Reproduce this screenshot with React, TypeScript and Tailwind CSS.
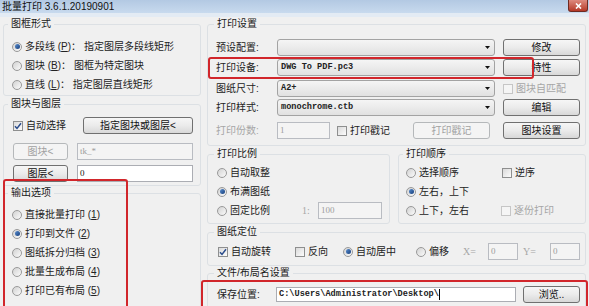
import React from 'react'

type Kids = { children?: React.ReactNode }

function Radio({ checked = false, children }: Kids & { checked?: boolean }) {
  return (
    <span className="flex items-center gap-[3px]">
      <span className="w-[10px] h-[10px] rounded-full border border-[#999] bg-linear-to-br from-[#d2d2d2] to-[#fbfbfb] flex items-center justify-center">
        {checked && <span className="w-[5px] h-[5px] rounded-full bg-linear-to-br from-[#5b8fd0] to-[#173f7c]" />}
      </span>
      <span>{children}</span>
    </span>
  )
}

function Check({ checked = false, disabled = false, children }: Kids & { checked?: boolean; disabled?: boolean }) {
  return (
    <span className={`flex items-center gap-[3px] ${disabled ? 'text-[#a6a6a6]' : ''}`}>
      <span
        className={`w-[10px] h-[10px] border flex items-center justify-center ${
          disabled ? 'border-[#c6c6c6] bg-[#f5f5f5]' : 'border-[#8e8f8f] bg-linear-to-br from-[#dadada] to-[#fcfcfc]'
        }`}
      >
        {checked && (
          <svg width="8" height="8" viewBox="0 0 8 8">
            <path d="M1 4.2 L3 6.4 L7 1.2" stroke="#2a4c8c" strokeWidth="1.5" fill="none" />
          </svg>
        )}
      </span>
      <span>{children}</span>
    </span>
  )
}

function Btn({ className = '', disabled = false, children }: Kids & { className?: string; disabled?: boolean }) {
  return (
    <button
      type="button"
      className={`h-[17px] flex items-center justify-center rounded-[3px] border ${
        disabled
          ? 'border-[#b5b8ba] bg-[#f4f4f4] text-[#a2a2a2]'
          : 'border-[#707070] bg-linear-to-b from-[#f6f6f6] via-[#ebebeb] to-[#d8d8d8] text-[#111]'
      } ${className}`}
    >
      {children}
    </button>
  )
}

function Combo({ value = '' }: { value?: string }) {
  return (
    <div className="w-[218px] h-[17px] flex items-center rounded-[3px] border border-[#a3a3a3] bg-linear-to-b from-[#f5f5f5] to-[#e1e1e1] pl-[3px] pr-[4px]">
      <span className="flex-1 font-['Liberation_Mono',monospace] text-[8.6px] font-bold text-[#222]">{value}</span>
      <svg width="5" height="3" viewBox="0 0 5 3">
        <path d="M0 0h5L2.5 3z" fill="#111" />
      </svg>
    </div>
  )
}

function Field({ value = '', className = '', disabled = false }: { value?: string; className?: string; disabled?: boolean }) {
  return (
    <div
      className={`h-[17px] border flex items-center pl-[2px] font-['Liberation_Serif',serif] text-[9px] ${
        disabled ? 'border-[#b9bcc2] bg-[#f4f4f4] text-[#9c9c9c]' : 'border-[#abadb3] bg-white text-[#111]'
      } ${className}`}
    >
      {value}
    </div>
  )
}

function Group({ title, className = '', offset = 'ml-[4px]', children }: Kids & { title: string; className?: string; offset?: string }) {
  return (
    <fieldset className={`border border-[#dce0e4] rounded-[3px] min-w-0 ${className}`}>
      <legend className={`${offset} px-[3px] leading-[12px] text-[#1a1a1a]`}>{title}</legend>
      {children}
    </fieldset>
  )
}

const U = ({ children }: Kids) => <span className="underline">{children}</span>

export default function App() {
  return (
    <div className="relative w-[589px] h-[306px] overflow-hidden bg-[#f0f0f0] text-[10px] text-[#222] font-['Liberation_Sans','Noto_Sans_CJK_SC',sans-serif]">
      {/* title bar */}
      <div className="h-[13px] flex items-start justify-between bg-linear-to-b from-[#b3c9e3] to-[#c8daee]">
        <span className="pl-[2px] leading-[13px] text-[#111]">批量打印 3.6.1.20190901</span>
        <span className="mr-[1px] w-[20px] h-[12px] rounded-b-[3px] border border-t-0 border-[#6e2a22] bg-linear-to-b from-[#dd8a7e] to-[#b53726] flex items-center justify-center">
          <svg width="7" height="6" viewBox="0 0 7 6">
            <path d="M1 0.5 L6 5.5 M6 0.5 L1 5.5" stroke="#fff" strokeWidth="1.6" />
          </svg>
        </span>
      </div>
      <div className="h-[4px] bg-[#e3ebf4]" />

      <div className="flex mt-[1px]">
        {/* left column */}
        <div className="ml-[3px] w-[198px] flex flex-col">
          <Group title="图框形式" className="h-[78px]">
            <div className="pt-[7px] pl-[8px] flex flex-col">
              <div className="h-[19px] flex items-center">
                <Radio checked>多段线 (<U>P</U>)： 指定图层多段线矩形</Radio>
              </div>
              <div className="h-[19px] flex items-center">
                <Radio>图块 (<U>B</U>)： 图框为特定图块</Radio>
              </div>
              <div className="h-[19px] flex items-center">
                <Radio>直线 (<U>L</U>)： 指定图层直线矩形</Radio>
              </div>
            </div>
          </Group>

          <Group title="图块与图层" className="h-[88px] mt-[2px]">
            <div className="pl-[9px] pr-[7px] flex flex-col">
              <div className="mt-[7px] flex items-center justify-between">
                <Check checked>自动选择</Check>
                <Btn className="w-[110px]">指定图块或图层&lt;</Btn>
              </div>
              <div className="mt-[9px] flex items-center">
                <Btn disabled className="w-[55px]">图块&lt;</Btn>
                <Field disabled value="tk_*" className="ml-[9px] w-[116px]" />
              </div>
              <div className="mt-[5px] flex items-center">
                <Btn className="w-[55px]">图层&lt;</Btn>
                <Field value="0" className="ml-[9px] w-[116px]" />
              </div>
            </div>
          </Group>

          <Group title="输出选项" className="h-[130px] mt-[1px]">
            <div className="pt-[6px] pl-[8px] flex flex-col">
              <div className="h-[19px] flex items-center">
                <Radio>直接批量打印 (<U>1</U>)</Radio>
              </div>
              <div className="h-[19px] flex items-center">
                <Radio checked>打印到文件 (<U>2</U>)</Radio>
              </div>
              <div className="h-[19px] flex items-center">
                <Radio>图纸拆分归档 (<U>3</U>)</Radio>
              </div>
              <div className="h-[19px] flex items-center">
                <Radio>批量生成布局 (<U>4</U>)</Radio>
              </div>
              <div className="h-[19px] flex items-center">
                <Radio>打印已有布局 (<U>5</U>)</Radio>
              </div>
            </div>
          </Group>
        </div>

        {/* right column */}
        <div className="ml-[6px] w-[379px] flex flex-col">
          <Group title="打印设置" offset="ml-[6px]" className="h-[128px]">
            <div className="pl-[8px] flex flex-col">
              <div className="mt-[9px] flex items-center">
                <span className="w-[61px]">预设配置:</span>
                <Combo />
                <Btn className="ml-[8px] w-[77px]">修改</Btn>
              </div>
              <div className="mt-[3px] flex items-center">
                <span className="w-[61px]">打印设备:</span>
                <Combo value="DWG To PDF.pc3" />
                <Btn className="ml-[8px] w-[77px]">特性</Btn>
              </div>
              <div className="mt-[4px] flex items-center">
                <span className="w-[61px]">图纸尺寸:</span>
                <Combo value="A2+" />
                <span className="ml-[8px]">
                  <Check disabled>图块自匹配</Check>
                </span>
              </div>
              <div className="mt-[2px] flex items-center">
                <span className="w-[61px]">打印样式:</span>
                <Combo value="monochrome.ctb" />
                <Btn className="ml-[8px] w-[77px]">编辑</Btn>
              </div>
              <div className="mt-[6px] flex items-center">
                <span className="w-[61px] text-[#a6a6a6]">打印份数:</span>
                <Field disabled value="1" className="w-[53px]" />
                <span className="ml-[7px] w-[76px]">
                  <Check>打印戳记</Check>
                </span>
                <Btn disabled className="w-[77px]">打印戳记</Btn>
                <Btn className="ml-[13px] w-[77px]">图块设置</Btn>
              </div>
            </div>
          </Group>

          <div className="mt-[2px] flex">
            <Group title="打印比例" offset="ml-[6px]" className="w-[183px] h-[76px]">
              <div className="pt-[3px] pl-[9px] flex flex-col">
                <div className="h-[19px] flex items-center">
                  <Radio>自动取整</Radio>
                </div>
                <div className="h-[19px] flex items-center">
                  <Radio checked>布满图纸</Radio>
                </div>
                <div className="h-[19px] flex items-center">
                  <span className="w-[85px]">
                    <Radio>固定比例</Radio>
                  </span>
                  <span className="w-[16px] text-[#a6a6a6] font-['Liberation_Serif',serif]">1:</span>
                  <Field disabled value="100" className="w-[64px] h-[15px]" />
                </div>
              </div>
            </Group>
            <Group title="打印顺序" offset="ml-[4px]" className="ml-[8px] w-[188px] h-[76px]">
              <div className="pt-[3px] pl-[7px] flex flex-col">
                <div className="h-[19px] flex items-center">
                  <span className="w-[96px]">
                    <Radio>选择顺序</Radio>
                  </span>
                  <Check>逆序</Check>
                </div>
                <div className="h-[19px] flex items-center">
                  <Radio checked>左右，上下</Radio>
                </div>
                <div className="h-[19px] flex items-center">
                  <span className="w-[95px]">
                    <Radio>上下，左右</Radio>
                  </span>
                  <Check disabled>逐份打印</Check>
                </div>
              </div>
            </Group>
          </div>

          <Group title="图纸定位" offset="ml-[6px]" className="mt-[2px] h-[40px]">
            <div className="mt-[5px] pl-[10px] h-[17px] flex items-center">
              <span className="w-[77px]">
                <Check checked>自动旋转</Check>
              </span>
              <span className="w-[48px]">
                <Check>反向</Check>
              </span>
              <span className="w-[73px]">
                <Radio checked>自动居中</Radio>
              </span>
              <span className="w-[47px]">
                <Radio>偏移</Radio>
              </span>
              <span className="w-[25px] text-[#a6a6a6] font-['Liberation_Serif',serif]">X=</span>
              <Field disabled value="0" className="w-[30px] h-[15px]" />
              <span className="w-[32px] pl-[5px] text-[#a6a6a6] font-['Liberation_Serif',serif]">Y=</span>
              <Field disabled value="0" className="w-[30px] h-[15px]" />
            </div>
          </Group>

          <Group title="文件/布局名设置" offset="ml-[6px]" className="mt-[1px] h-[50px]">
            <div className="mt-[7px] pl-[9px] flex items-center">
              <span className="w-[59px]">保存位置:</span>
              <div className="w-[240px] h-[15px] border border-[#abadb3] bg-white flex items-center pl-[2px] font-['Liberation_Mono',monospace] text-[8.6px] font-bold text-[#222]">
                C:\Users\Administrator\Desktop\<span className="w-px h-[11px] bg-black" />
              </div>
              <Btn className="ml-[7px] w-[57px] h-[15px]">浏览..</Btn>
            </div>
          </Group>
        </div>
      </div>

      {/* red annotation frames */}
      <div className="absolute left-[208px] top-[57px] w-[326px] h-[22px] rounded-[3px] border-2 border-[#d1262b]" />
      <div className="absolute left-[3px] top-[179px] w-[125px] h-[140px] rounded-[3px] border-2 border-[#d1262b]" />
      <div className="absolute left-[201px] top-[280px] w-[387px] h-[40px] rounded-[3px] border-2 border-[#d1262b]" />
    </div>
  )
}
